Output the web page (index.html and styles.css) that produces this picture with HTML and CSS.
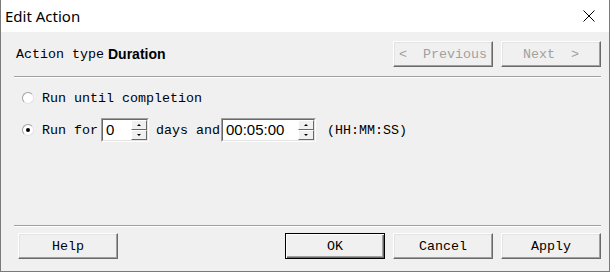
FILE: index.html
```html
<!DOCTYPE html>
<html lang="en">
<head>
    <meta charset="UTF-8">
    <title>Edit Action</title>
    <link rel="stylesheet" href="styles.css">
</head>
<body>
<div class="window">
    <div class="titlebar">
        <span class="title">Edit Action</span>
        <svg class="close" width="12" height="12" viewBox="0 0 12 12">
            <path d="M0.5 0.5 L11.5 11.5 M11.5 0.5 L0.5 11.5" stroke="#000" stroke-width="1" fill="none"/>
        </svg>
    </div>
    <div class="main">
        <div class="header">
            <span class="type-label">Action type</span>
            <span class="type-value">Duration</span>
            <div class="nav">
                <button class="btn" disabled>&lt;  Previous</button>
                <button class="btn" disabled>Next  &gt;</button>
            </div>
        </div>
        <div class="sep"></div>

        <div class="options">
            <div class="row">
                <span class="radio"></span>
                <span>Run until completion</span>
            </div>
            <div class="row">
                <span class="radio checked"></span>
                <span>Run for</span>
                <div class="field days">
                    <div class="field-inner">
                        <span class="field-value">0</span>
                        <div class="spin">
                            <span class="spin-btn"><i class="arrow-up"></i></span>
                            <span class="spin-btn"><i class="arrow-down"></i></span>
                        </div>
                    </div>
                </div>
                <span class="days-label">days and</span>
                <div class="field time">
                    <div class="field-inner">
                        <span class="field-value">00:05:00</span>
                        <div class="spin">
                            <span class="spin-btn"><i class="arrow-up"></i></span>
                            <span class="spin-btn"><i class="arrow-down"></i></span>
                        </div>
                    </div>
                </div>
                <span class="hint">(HH:MM:SS)</span>
            </div>
        </div>

        <div class="sep"></div>
        <div class="footer">
            <button class="btn help">Help</button>
            <button class="btn default ok">OK</button>
            <button class="btn">Cancel</button>
            <button class="btn">Apply</button>
        </div>
    </div>
</div>
</body>
</html>
```

FILE: styles.css
```css
* {
    box-sizing: border-box;
}

body {
    margin: 0;
    font-family: "Liberation Mono", monospace;
    font-size: 13.33px;
    color: #000;
}

.window {
    width: 610px;
    height: 272px;
    display: flex;
    flex-direction: column;
    background: #f0f0f0;
    border: 1px solid #7a7a7a;
    border-top: none;
}

.titlebar {
    height: 32px;
    flex: none;
    display: flex;
    align-items: center;
    justify-content: space-between;
    padding: 0 14px 0 4px;
    background: #fff;
    font-family: "Noto Sans", sans-serif;
    font-size: 15px;
}

.main {
    flex: 1;
    display: flex;
    flex-direction: column;
    padding: 0 8px 12px 13px;
}

.header {
    display: flex;
    align-items: center;
    height: 26px;
    margin-top: 9px;
}

.type-label {
    padding-left: 2px;
}

.type-value {
    margin-left: 4px;
    font-family: "Liberation Sans", sans-serif;
    font-weight: bold;
    font-size: 14px;
}

.nav {
    margin-left: auto;
    display: flex;
    gap: 8px;
}

.sep {
    height: 2px;
    flex: none;
    border-top: 1px solid #a0a0a0;
    border-bottom: 1px solid #fff;
}

.header + .sep {
    margin-top: 9px;
}

.btn {
    width: 100px;
    height: 26px;
    padding: 0;
    background: #f0f0f0;
    border: 1px solid;
    border-color: #fff #696969 #696969 #fff;
    box-shadow: inset -1px -1px #a0a0a0, inset 1px 1px #e3e3e3;
    font-family: inherit;
    font-size: inherit;
    color: #000;
    white-space: pre;
}

.btn:disabled {
    color: #a0a0a0;
}

.btn.default {
    border-color: #000;
    box-shadow: inset 1px 1px #fff, inset -1px -1px #696969, inset -2px -2px #a0a0a0;
}

.options {
    flex: 1;
    display: flex;
    flex-direction: column;
    gap: 8px;
    padding: 8px 0 0 8px;
}

.row {
    display: flex;
    align-items: center;
    height: 24px;
}

.radio {
    position: relative;
    width: 12px;
    height: 12px;
    margin-right: 8px;
    border-radius: 50%;
    background: #fff;
    border: 1px solid;
    border-color: #a0a0a0 #e3e3e3 #e3e3e3 #a0a0a0;
}

.radio.checked::after {
    content: "";
    position: absolute;
    left: 3px;
    top: 3px;
    width: 4px;
    height: 4px;
    border-radius: 50%;
    background: #000;
}

.field {
    display: flex;
    height: 24px;
    border: 1px solid;
    border-color: #a0a0a0 #fff #fff #a0a0a0;
}

.field.days {
    width: 48px;
    margin-left: 3px;
}

.field.time {
    width: 95px;
    margin-left: 1px;
}

.field-inner {
    flex: 1;
    display: flex;
    background: #fff;
    border: 1px solid;
    border-color: #696969 #e3e3e3 #e3e3e3 #696969;
}

.field-value {
    flex: 1;
    padding-left: 3px;
    font-family: "Liberation Sans", sans-serif;
    font-size: 15px;
    line-height: 20px;
}

.spin {
    width: 16px;
    display: flex;
    flex-direction: column;
}

.spin-btn {
    flex: 1;
    display: flex;
    align-items: center;
    justify-content: center;
    background: #f0f0f0;
    border: 1px solid;
    border-color: #fff #696969 #696969 #fff;
}

.arrow-up {
    border-left: 2px solid transparent;
    border-right: 2px solid transparent;
    border-bottom: 2px solid #000;
}

.arrow-down {
    border-left: 2px solid transparent;
    border-right: 2px solid transparent;
    border-top: 2px solid #000;
}

.days-label {
    margin-left: 7px;
}

.hint {
    margin-left: 11px;
}

.footer {
    display: flex;
    gap: 8px;
    margin-top: 6px;
}

.help {
    margin-left: 4px;
}

.ok {
    margin-left: auto;
}
```
